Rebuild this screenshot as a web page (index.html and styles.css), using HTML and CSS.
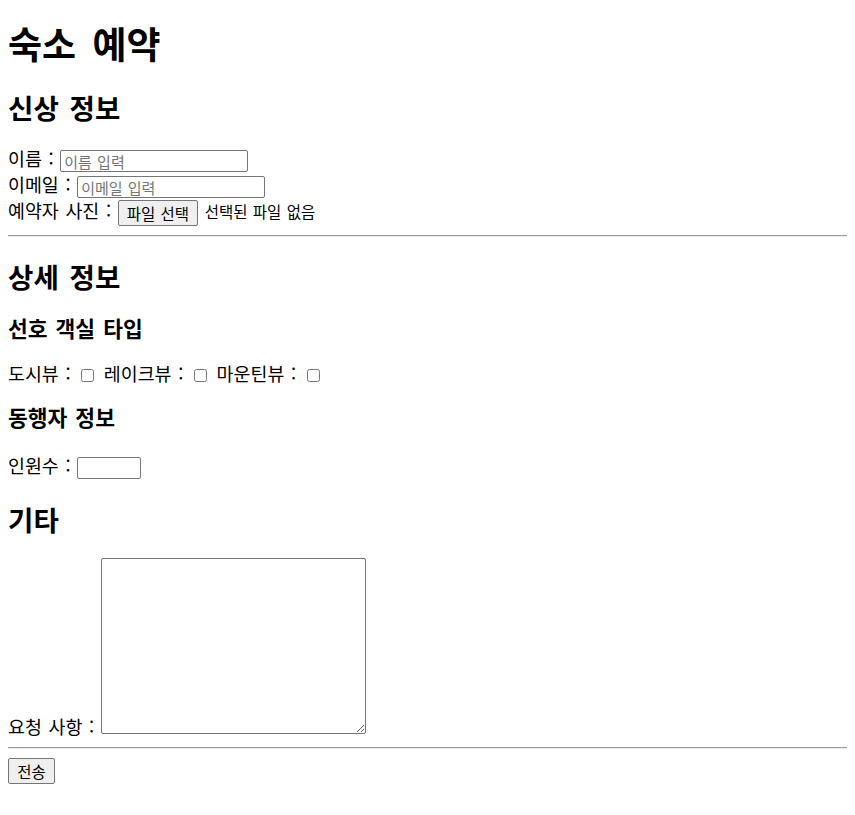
FILE: index.html
```html
<!DOCTYPE html>
<html lang="ko">
<head>
<meta charset="utf-8">
<title>숙소 예약</title>
<link rel="stylesheet" href="styles.css">
</head>
<body>
<form class="form">
<h1 class="title">숙소 예약</h1>
<h2 class="sec sec-first">신상 정보</h2>
<div class="row row-first">이름 : <input class="text" type="text" placeholder="이름 입력"></div>
<div class="row">이메일 : <input class="text" type="email" placeholder="이메일 입력"></div>
<div class="row row-file">예약자 사진 : <button type="button" class="btn filebtn">파일 선택</button> <span class="fname">선택된 파일 없음</span></div>
<hr class="rule rule-top">
<h2 class="sec sec-detail">상세 정보</h2>
<h3 class="sub sub-room">선호 객실 타입</h3>
<p class="checks">도시뷰 : <input class="chk" type="checkbox"> 레이크뷰 : <input class="chk" type="checkbox"> 마운틴뷰 : <input class="chk" type="checkbox"></p>
<h3 class="sub sub-comp">동행자 정보</h3>
<div class="row row-num">인원수 : <input class="num" type="number"></div>
<h2 class="sec sec-etc">기타</h2>
<div class="row-area">요청 사항 : <textarea class="area"></textarea></div>
<hr class="rule rule-bottom">
<button type="submit" class="btn submit">전송</button>
</form>
</body>
</html>
```
FILE: styles.css
```css
body {
  margin: 8px;
  font-family: "Noto Sans CJK KR", "Liberation Sans", sans-serif;
  font-size: 18.4px;
  word-spacing: 1.5px;
  color: #000;
  background: #fff;
}
.form { margin: 0; }
.title {
  font-size: 37px;
  line-height: 34px;
  margin: 18px 0 0;
  font-weight: 700;
  word-spacing: 6px;
}
.sec {
  font-size: 27.6px;
  line-height: 32px;
  margin: 0;
  font-weight: 700;
  word-spacing: 3px;
}
.sec-first { margin-top: 31px; }
.sec-detail { margin-top: 23px; }
.sec-etc { margin-top: 25.5px; }
.sub {
  font-size: 21.5px;
  line-height: 26px;
  margin: 0;
  font-weight: 700;
  word-spacing: 2px;
}
.sub-room { margin-top: 22.5px; }
.sub-comp { margin-top: 19px; }
.row {
  height: 26px;
  line-height: 26px;
  white-space: nowrap;
}
.row-first { margin-top: 22px; }
.row-file { height: 29px; }
.row-num { margin-top: 22px; }
.text {
  box-sizing: border-box;
  font-family: "Noto Sans CJK KR", "Liberation Sans", sans-serif;
  font-size: 15px;
  word-spacing: 1px;
  width: 188px;
  height: 22px;
  padding: 0 3px;
  border: 1px solid #767676;
  border-radius: 2px;
  margin: 0;
  vertical-align: middle;
}
.text::placeholder { color: #757575; }
.btn {
  box-sizing: border-box;
  font-family: "Noto Sans CJK KR", "Liberation Sans", sans-serif;
  font-size: 15.5px;
  word-spacing: 1px;
  height: 26px;
  padding: 0 8px;
  border: 1px solid #767676;
  border-radius: 2px;
  background: #efefef;
  color: #000;
  margin: 0;
  vertical-align: middle;
  line-height: 22px;
}
.fname { font-size: 15.5px; word-spacing: 1px; }
.checks {
  margin: 20px 0 0;
  line-height: 24px;
  white-space: nowrap;
}
.chk {
  width: 13px;
  height: 13px;
  margin: 0 3px 0 4px;
  vertical-align: -1px;
}
.num {
  box-sizing: border-box;
  width: 64px;
  height: 22px;
  border: 1px solid #767676;
  border-radius: 2px;
  margin: 0;
  vertical-align: middle;
}
.row-area {
  margin-top: 23px;
  padding-bottom: 3px;
  line-height: 20px;
  white-space: nowrap;
}
.area {
  box-sizing: border-box;
  width: 265px;
  height: 176px;
  border: 1px solid #767676;
  border-radius: 2px;
  margin: 0;
  vertical-align: baseline;
  resize: both;
}
.rule {
  border: 0;
  border-top: 1px solid #9a9a9a;
  border-bottom: 1px solid #eeeeee;
  margin: 8px 0;
  height: 0;
}
.rule-top { margin-top: 9px; }
.rule-bottom { margin-bottom: 9px; }
.submit { display: block; width: 47px; padding: 0; }
```
